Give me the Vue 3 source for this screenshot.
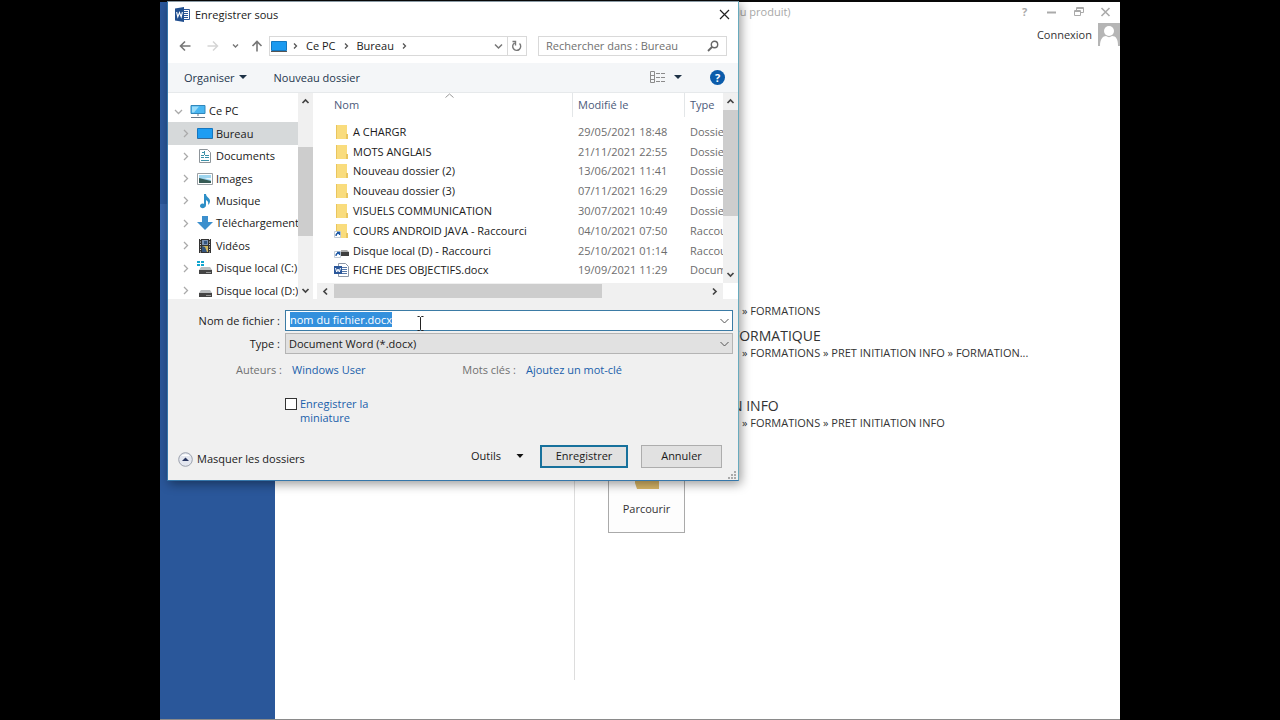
<script setup>
import { ref, onMounted } from 'vue'

const places = [
  { name: 'Ce PC', icon: 'pc', root: true },
  { name: 'Bureau', icon: 'desktop', active: true },
  { name: 'Documents', icon: 'doc' },
  { name: 'Images', icon: 'image' },
  { name: 'Musique', icon: 'music' },
  { name: 'Téléchargement', icon: 'download' },
  { name: 'Vidéos', icon: 'video' },
  { name: 'Disque local (C:)', icon: 'diskc' },
  { name: 'Disque local (D:)', icon: 'disk' },
]

const files = [
  { name: 'A CHARGR', date: '29/05/2021 18:48', type: 'Dossier', icon: 'folder' },
  { name: 'MOTS ANGLAIS', date: '21/11/2021 22:55', type: 'Dossier', icon: 'folder' },
  { name: 'Nouveau dossier (2)', date: '13/06/2021 11:41', type: 'Dossier', icon: 'folder' },
  { name: 'Nouveau dossier (3)', date: '07/11/2021 16:29', type: 'Dossier', icon: 'folder' },
  { name: 'VISUELS COMMUNICATION', date: '30/07/2021 10:49', type: 'Dossier', icon: 'folder' },
  { name: 'COURS ANDROID JAVA - Raccourci', date: '04/10/2021 07:50', type: 'Raccourci', icon: 'folderlink' },
  { name: 'Disque local (D) - Raccourci', date: '25/10/2021 01:14', type: 'Raccourci', icon: 'disklink' },
  { name: 'FICHE DES OBJECTIFS.docx', date: '19/09/2021 11:29', type: 'Document', icon: 'word' },
  { name: '', date: '', type: '', icon: 'folder' },
]

const recents = [
  { title: '', path: '» FORMATIONS' },
  { title: 'FORMATIQUE', path: '» FORMATIONS » PRET INITIATION INFO » FORMATION...' },
  { title: 'N INFO', path: '» FORMATIONS » PRET INITIATION INFO' },
]

const fileName = ref('nom du fichier.docx')
const nameInput = ref(null)
onMounted(() => {
  nameInput.value.focus()
  nameInput.value.select()
})
</script>

<template>
  <div class="stage">
    <div class="office">
      <nav class="rail"><div class="rail-item"></div></nav>
      <div class="places"></div>
      <main class="pane">
        <header class="office-title">
          <span class="product">du produit)</span>
          <button class="winbtn" aria-label="Aide"><b>?</b></button>
          <button class="winbtn" aria-label="Réduire"><svg width="12" height="12"><path d="M1 6.500h9" stroke="#aaa" stroke-width="2" /></svg></button>
          <button class="winbtn" aria-label="Restaurer"><svg width="12" height="12" fill="none" stroke="#aaa"><path d="M1.500 4.500h6v5h-6zM1.500 5.500h6M3.500 4.500v-3h7v5h-3M3.500 2.500h7" /></svg></button>
          <button class="winbtn" aria-label="Fermer"><svg width="12" height="12"><path d="M1.500 2l8 8M9.500 2l-8 8" stroke="#aaa" stroke-width="1.600" /></svg></button>
        </header>
        <div class="account">
          <a href="#">Connexion</a>
          <svg width="22" height="23" viewBox="0 0 22 23"><path fill="#b5b5b5" d="M0 0h22v23H0z" /><circle cx="11" cy="8" r="5" fill="#fff" /><path fill="#fff" d="M2 23c0-7 3-10 6-10 2 1.500 4 1.500 6 0 4 0 6 3 6 10z" /></svg>
        </div>
        <ul class="recents">
          <li v-for="r in recents" :key="r.path"><h3>{{ r.title }}</h3><p>{{ r.path }}</p></li>
        </ul>
        <button class="browse">
          <svg width="26" height="34" viewBox="0 0 26 34"><path fill="#d9b767" d="M1 4h9l3 4h12v26H3L1 28z" /></svg>
          <span>Parcourir</span>
        </button>
      </main>
    </div>

    <section class="dialog" role="dialog" aria-label="Enregistrer sous">
      <header class="dlg-title">
        <svg width="15" height="15" viewBox="0 0 15 15"><path fill="#fff" stroke="#2b579a" d="M8 2.500h6.500v10H8z" /><path stroke="#2b579a" d="M9 4.500h4M9 6.500h4M9 8.500h4M9 10.500h4" /><path fill="#214f8f" d="M0 1.500L9 0v15L0 13.500z" /><path fill="none" stroke="#fff" stroke-width="1.100" d="M1.600 5l1.200 5 1.700-4.500L6.200 10l1.200-5" /></svg>
        <span>Enregistrer sous</span>
        <button class="close" aria-label="Fermer"><svg width="11" height="11"><path d="M1 1l9 9M10 1l-9 9" stroke="#222" stroke-width="1.200" /></svg></button>
      </header>

      <div class="navrow">
        <button class="nb" aria-label="Précédent"><svg width="12" height="12" fill="none" stroke="#777" stroke-width="1.600"><path d="M11.500 6H1.500M6 1.500L1.500 6 6 10.500" /></svg></button>
        <button class="nb next" aria-label="Suivant"><svg width="12" height="12" fill="none" stroke="#d5d5d5" stroke-width="1.500"><path d="M.5 6h10M6 1.500L10.500 6 6 10.500" /></svg></button>
        <button class="nb hist" aria-label="Historique"><svg width="7" height="6" fill="none" stroke="#777" stroke-width="1.400"><path d="M1 1.500l2.500 2.500L6 1.500" /></svg></button>
        <button class="nb up" aria-label="Dossier parent"><svg width="12" height="12" fill="none" stroke="#777" stroke-width="1.600"><path d="M6 11.500v-10M1.500 6L6 1.500 10.500 6" /></svg></button>
        <div class="address">
          <svg width="16" height="13" viewBox="0 0 16 13"><path fill="#1b9af0" stroke="#1478c0" d="M.5 1.500h15v9H.5z" /><path stroke="#555" d="M0 11.500h16" /></svg>
          <svg class="sep" width="5" height="8"><path d="M1 1.500L3.500 4 1 6.500" /></svg><span>Ce PC</span>
          <svg class="sep" width="5" height="8"><path d="M1 1.500L3.500 4 1 6.500" /></svg><span>Bureau</span>
          <svg class="sep" width="5" height="8"><path d="M1 1.500L3.500 4 1 6.500" /></svg>
          <button class="drop" aria-label="Emplacements précédents"><svg width="9" height="7" fill="none" stroke="#777" stroke-width="1.500"><path d="M1 1.500L4.500 5 8 1.500" /></svg></button>
          <button class="refresh" aria-label="Actualiser"><svg width="11" height="12" fill="none" stroke="#777" stroke-width="1.400"><path d="M8.500 3.500a4 4 0 1 1-5-.5M1.500 1.500h3v4" /></svg></button>
        </div>
        <div class="search">
          <input type="text" placeholder="Rechercher dans : Bureau" aria-label="Rechercher dans : Bureau" />
          <svg width="12" height="12" fill="none" stroke="#666"><circle cx="7.500" cy="4.500" r="3.200" stroke-width="1.400" /><path stroke-width="1.800" d="M5 7L1 11" /></svg>
        </div>
      </div>

      <div class="toolbar">
        <button class="tb">Organiser<svg width="8" height="5"><path fill="#1e3246" d="M0 0h8L4 4z" /></svg></button>
        <button class="tb new">Nouveau dossier</button>
        <button class="tb view" aria-label="Affichage"><svg class="grid" width="16" height="13" fill="none" stroke="#8b8b8b"><path d="M.5.500h4v11h-4zM.5 4.500h4M.5 8.500h4" /><path stroke-dasharray="4 1" d="M6 2.500h9M6 6.500h9M6 10.500h9" /></svg><svg width="8" height="5"><path fill="#1e3246" d="M0 0h8L4 4z" /></svg></button>
        <button class="help" aria-label="Aide">?</button>
      </div>

      <div class="browser">
        <ul class="tree">
          <li v-for="p in places" :key="p.name" :class="{ root: p.root, active: p.active }">
            <svg v-if="p.root" class="exp" width="9" height="9"><path d="M1 3l3.500 3.500L8 3" /></svg>
            <svg v-else class="exp" width="9" height="9"><path d="M3 1l3.500 3.500L3 8" /></svg>
            <svg class="ico" width="16" height="16" viewBox="0 0 16 16">
              <g v-if="p.icon === 'pc'"><path fill="#48b6f2" stroke="#3187bb" d="M1 2.500h14v8H1z" /><path fill="#9adcf9" d="M2 3.500h7l-5 6H2z" /><path stroke="#678" d="M8 11v2M1 14.500h14" /></g>
              <g v-else-if="p.icon === 'desktop'"><path fill="#1e9df2" stroke="#1576bf" d="M.5 2.500h15v10H.5z" /><path stroke="#3a6a94" d="M1 12.500h14" /></g>
              <g v-else-if="p.icon === 'doc'"><path fill="#fff" stroke="#8d9499" d="M2.500 1.500h8l3 3v10h-11z" /><path stroke="#3c91a8" d="M5 4.500h3M4 7.500h3M8 7.500h4M4 9.500h3M8 9.500h4M4 12.500h8M7.500 3v4" /></g>
              <g v-else-if="p.icon === 'image'"><path fill="#fff" stroke="#9aa0a4" d="M.5 2.500h15v11H.5z" /><path fill="#9ed5ef" d="M2 4h12v8H2z" /><path fill="#365b55" d="M2 7l4 1 8 2v2H2z" /><path fill="#eaf6fb" d="M7 7h7v2z" /></g>
              <g v-else-if="p.icon === 'music'"><path fill="#2e8fc7" d="M7 1h2c0 3 4 4 4 7 0 2-1 3-2 4 1-4-1-4-2-5v5c0 4-6 4-6 1 0-2 2-3 4-2z" /></g>
              <g v-else-if="p.icon === 'download'"><path fill="#3c8fcd" d="M5 1h6v6h5l-8 8-8-8h5z" /></g>
              <g v-else-if="p.icon === 'video'"><path fill="#333" d="M2 1h12v14H2z" /><path fill="#7c93b5" d="M5 2h6v5H5z" /><path fill="#d2b95f" d="M5 8h6v6H5z" /><path fill="#34557f" d="M7 3h3v3H7zM5 8l3 1 2 5H5z" /><path stroke="#ddd" stroke-dasharray="1 1.500" d="M3.500 1v14M12.500 1v14" /></g>
              <g v-else>
                <path v-if="p.icon === 'diskc'" fill="#12a6cf" d="M0 1h3v2H0zM4 1h3v2H4zM0 4h3v2H0zM4 4h3v2H4z" />
                <path fill="#b9bcbe" d="M4 7h9l2 3H2z" /><path fill="#444" d="M2 10h13v4H2z" /><path stroke="#999" d="M9 12.500h5" />
              </g>
            </svg>
            <span>{{ p.name }}</span>
          </li>
        </ul>
        <div class="vbar treebar">
          <svg width="9" height="7"><path d="M1.500 5l3-3 3 3" /></svg>
          <div class="track"><div class="thumb"></div></div>
          <svg width="9" height="7"><path d="M1.500 2l3 3 3-3" /></svg>
        </div>
        <div class="files">
          <div class="filerow">
            <div class="listing">
              <table>
                <thead><tr><th>Nom<svg class="sort" width="9" height="5" fill="none" stroke="#999"><path d="M.5 4.500l4-3.500 4 3.500" /></svg></th><th>Modifié le</th><th>Type</th></tr></thead>
                <tbody>
                  <tr v-for="f in files" :key="f.name">
                    <td>
                      <svg width="16" height="16" viewBox="0 0 16 16">
                        <g v-if="f.icon === 'folder' || f.icon === 'folderlink'"><path fill="#f9dc7d" d="M2 1h11v9h1v5H2z" /><path fill="#e9c55e" d="M12 10h2v5h-2zM2 1h1v14H2z" /></g>
                        <g v-if="f.icon === 'disklink'"><path fill="#aaa" d="M7 7h6l2 2H7z" /><path fill="#3f3f3f" d="M7 9h8v4H7z" /></g>
                        <g v-if="f.icon === 'folderlink' || f.icon === 'disklink'"><path fill="#fff" stroke="#c3ccd6" d="M.5 8.500h6v6h-6z" /><path fill="none" stroke="#215ba6" stroke-width="1.300" d="M2 13c0-2 1-3 3-3M3 9.500h2.500V12" /></g>
                        <g v-if="f.icon === 'word'"><path fill="#fff" stroke="#8d98a8" d="M4.500 1.500h7l3 3v10h-10z" /><path stroke="#5577a8" d="M8 5.500h5M8 7.500h5M8 9.500h5M8 11.500h5" /><path fill="#2b579a" d="M0 4h8v8H0z" /><path fill="none" stroke="#fff" d="M1.500 6l1.200 4L4 7l1.300 3 1.200-4" /></g>
                      </svg>{{ f.name }}
                    </td>
                    <td>{{ f.date }}</td><td>{{ f.type }}</td>
                  </tr>
                </tbody>
              </table>
            </div>
            <div class="vbar listbar">
              <svg width="9" height="7"><path d="M1.500 5l3-3 3 3" /></svg>
              <div class="track"><div class="thumb"></div></div>
              <svg width="9" height="7"><path d="M1.500 2l3 3 3-3" /></svg>
            </div>
          </div>
          <div class="hbar">
            <svg width="7" height="9"><path d="M5 1.500l-3 3 3 3" /></svg>
            <div class="track"><div class="thumb"></div></div>
            <svg width="7" height="9"><path d="M2 1.500l3 3-3 3" /></svg>
          </div>
        </div>
      </div>

      <form class="form" @submit.prevent>
        <label for="fname">Nom de fichier :</label>
        <div class="field">
          <input id="fname" ref="nameInput" v-model="fileName" type="text" />
          <svg class="chev" width="9" height="6"><path d="M.5 1l4 4 4-4" /></svg>
          <svg class="ibeam" width="7" height="15"><path fill="none" stroke="#222" d="M.5.500h2l1 1 1-1h2M3.500 1.500v12M.5 14.500h2l1-1 1 1h2" /></svg>
        </div>
        <label for="ftype">Type :</label>
        <div class="field">
          <select id="ftype"><option>Document Word (*.docx)</option></select>
          <svg class="chev" width="9" height="6"><path d="M.5 1l4 4 4-4" /></svg>
        </div>
      </form>
      <div class="meta">
        <span class="key">Auteurs :</span><a href="#">Windows User</a>
        <span class="key">Mots clés :</span><a href="#">Ajoutez un mot-clé</a>
      </div>
      <label class="thumbopt"><input type="checkbox" /><span>Enregistrer la miniature</span></label>
      <footer class="foot">
        <button class="tb hide"><svg width="15" height="15" viewBox="0 0 15 15"><circle cx="7.500" cy="7.500" r="6.800" fill="#e4e7ef" stroke="#9ba1ad" /><path fill="#fff" d="M3 4a6 5 0 0 1 9 0z" /><path fill="#27345e" d="M4 9h7L7.500 5.500z" /></svg>Masquer les dossiers</button>
        <button class="tb tools">Outils<svg width="8" height="5"><path fill="#111" d="M.5 0h7L4 4z" /></svg></button>
        <button class="btn primary">Enregistrer</button>
        <button class="btn">Annuler</button>
      </footer>
      <svg class="grip" width="8" height="8" fill="#aaa"><path d="M6 0h2v2H6zM3 3h2v2H3zM6 3h2v2H6zM0 6h2v2H0zM3 6h2v2H3zM6 6h2v2H6z" /></svg>
    </section>
  </div>
</template>

<style>
body { margin: 0; background: #000; }
</style>

<style scoped>
* { box-sizing: border-box; }
.stage { position: relative; width: 75%; margin: 0 auto; font: 11px/16px "Open Sans", "Noto Sans", sans-serif; color: #1a1a1a; }
button, input, select { font: inherit; color: inherit; }
button { border: 0; padding: 0; background: none; }
ul { list-style: none; margin: 0; padding: 0; }
a { text-decoration: none; }
svg { flex: none; }

.office { display: flex; min-height: 100vh; background: #fff; border-top: 2px solid #080808; border-bottom: 1px solid #8a8a8a; }
.rail { flex: none; width: 115px; background: #2a579a; padding-top: 202px; }
.rail-item { height: 36px; background: #3663a8; }
.places { flex: none; width: 300px; margin-bottom: 39px; border-right: 1px solid #ddd; }
.pane { flex: 1; min-width: 0; display: flex; flex-direction: column; align-items: flex-start; }
.office-title { align-self: stretch; display: flex; align-items: center; height: 20px; padding: 0 1px 0 158px; color: #a8a8a8; }
.product { margin-right: auto; }
.winbtn { width: 27px; height: 18px; display: flex; align-items: center; justify-content: center; color: #aaa; }
.account { align-self: flex-end; display: flex; align-items: center; gap: 6px; margin-top: 1px; }
.account a { color: #333; }
.recents { margin-top: 239px; padding-left: 157px; color: #333; white-space: nowrap; }
.recents li { height: 42px; }
.recents li + li + li { margin-top: 28px; }
.recents h3 { margin: 0; height: 18px; font-weight: 400; font-size: 14px; line-height: 18px; }
.recents p { margin: 0; padding-left: 10px; line-height: 16px; }
.browse { display: flex; flex-direction: column; align-items: center; gap: 12px; width: 77px; margin: 15px 0 0 33px; padding: 0 0 15px; border: 1px solid #aaa; background: #fdfdfd; color: #333; font-weight: 500; }

.dialog { position: absolute; top: 1px; left: 7px; right: 381px; background: #f0f0f0; border: 1px solid #3677aa; border-top-color: #8a9aa5; border-right-color: #68aabd; box-shadow: 2px 3px 10px rgba(0, 0, 0, 0.4); }
.dlg-title { display: flex; align-items: center; gap: 5px; height: 25px; padding: 0 8px 0 7px; background: #fff; }
.close { margin-left: auto; display: flex; }
.navrow { display: flex; align-items: center; height: 36px; padding: 2px 11px 0; background: #fff; }
.nb { display: flex; }
.next { margin-left: 16px; }
.hist { margin-left: 13px; }
.up { margin-left: 12px; }
.address { flex: 1; display: flex; align-items: center; height: 20px; margin-left: 6px; padding-left: 1px; border: 1px solid #d9d9d9; }
.address span { margin-right: 8px; }
.sep { margin: 0 8px 0 6px; fill: none; stroke: #555; stroke-width: 1.3; }
.address span + .sep { margin-left: 0; }
.drop { margin-left: auto; display: flex; }
.refresh { display: flex; align-items: center; height: 18px; margin-left: 4px; padding: 0 4px 0 3px; border-left: 1px solid #d9d9d9; }
.search { display: flex; align-items: center; width: 189px; height: 20px; margin-left: 11px; padding: 0 7px; border: 1px solid #d9d9d9; }
.search input { flex: 1; min-width: 0; border: 0; padding: 0; outline: 0; background: none; }
.search input::placeholder { color: #707070; opacity: 1; }
.toolbar { display: flex; align-items: center; height: 30px; padding: 0 13px 0 16px; background: #f4f6f8; border-bottom: 1px solid #e6e9eb; color: #24364e; }
.tb { display: flex; align-items: center; gap: 4px; }
.new { margin-left: 27px; }
.view { margin-left: auto; gap: 8px; }
.help { width: 15px; height: 15px; margin-left: 28px; border-radius: 50%; background: #0b5cab; color: #fff; font-weight: 700; line-height: 15px; }

.browser { display: flex; height: 206px; background: #fff; overflow: hidden; }
.tree { flex: none; width: 130px; height: 209px; padding-top: 7px; white-space: nowrap; display: grid; grid-template-rows: repeat(9, 1fr); }
.tree li { display: flex; align-items: center; padding-left: 13px; overflow: hidden; }
.tree .root { padding-left: 6px; }
.tree .active { background: #d6d9da; }
.exp { fill: none; stroke: #aaa; stroke-width: 1.3; margin-right: 7px; }
.ico { margin-right: 3px; }
.vbar { flex: none; display: flex; flex-direction: column; align-items: center; width: 15px; background: #f0f0f0; }
.vbar svg, .hbar svg { fill: none; stroke: #444; stroke-width: 1.7; margin: 5px 0; }
.vbar .track { flex: 1; width: 100%; }
.thumb { background: #cdcdcd; }
.treebar .thumb { height: 52%; margin-top: 37px; }
.listbar .thumb { height: 68%; }
.files { flex: 1; min-width: 0; display: flex; flex-direction: column; padding-left: 4px; }
.filerow { display: flex; height: 190px; }
.listing { flex: 1; min-width: 0; overflow: hidden; }
table, thead, tbody { display: block; }
tr { display: grid; grid-template-columns: 255px 112px 1fr; align-items: center; white-space: nowrap; }
th { position: relative; height: 24px; padding: 0 0 0 5px; border-left: 1px solid #e3e6e8; text-align: left; font-weight: 400; line-height: 24px; color: #4c5a7a; }
th:first-child { padding-left: 17px; border-left: 0; }
.sort { position: absolute; top: 0; left: 50%; }
tbody { display: grid; grid-template-rows: repeat(9, 1fr); height: 178px; margin-top: 5px; }
td { padding: 0 0 0 6px; color: #6d6d6d; overflow: hidden; }
td:first-child { display: flex; align-items: center; gap: 3px; padding-left: 17px; color: #1a1a1a; }
.hbar { display: flex; align-items: center; height: 16px; margin-right: 15px; background: #f0f0f0; }
.hbar svg { margin: 0 5px; }
.hbar .track { flex: 1; }
.hbar .thumb { height: 14px; width: 72%; }

.form { display: grid; grid-template-columns: 112px 1fr; column-gap: 5px; row-gap: 2px; align-items: center; padding: 11px 5px 0 0; }
.form label { text-align: right; }
.field { position: relative; height: 21px; }
.field input, .field select { display: block; width: 100%; height: 21px; border-radius: 0; outline: 0; appearance: none; }
.field input { border: 1px solid #3b7ba5; background: #fff; padding: 0 20px 2px 4px; line-height: 16px; }
.field input::selection { background: #3390dd; color: #fff; }
.field select { border: 1px solid #b4b4b4; background: #e1e1e1; padding: 0 20px 0 3px; }
.chev { position: absolute; right: 4px; top: 8px; fill: none; stroke: #555; pointer-events: none; }
.ibeam { position: absolute; left: 132px; top: 6px; pointer-events: none; }
.meta { display: flex; align-items: center; height: 32px; }
.meta .key { flex: none; width: 114px; text-align: right; color: #707070; }
.meta a { flex: none; width: 110px; margin-left: 10px; color: #1a5fab; white-space: nowrap; }
.meta a:last-child { width: auto; }
.thumbopt { display: flex; align-items: flex-start; gap: 3px; width: 200px; margin: 11px 0 0 117px; line-height: 14px; color: #1a5fab; }
.thumbopt span { width: 80px; }
.thumbopt input { flex: none; appearance: none; width: 12px; height: 12px; margin: 1px 0 0; border: 1px solid #333; background: #fff; }
.foot { display: flex; align-items: center; height: 30px; margin: 16px 0 9px; padding: 0 16px 0 10px; }
.hide { margin-top: 6px; }
.tools { margin-left: auto; gap: 15px; }
.btn { width: 81px; height: 23px; margin-left: 13px; border: 1px solid #adadad; background: #e1e1e1; }
.primary { width: 88px; margin-left: 16px; border: 2px solid #17719c; }
.grip { position: absolute; right: 2px; bottom: 1px; }
</style>
